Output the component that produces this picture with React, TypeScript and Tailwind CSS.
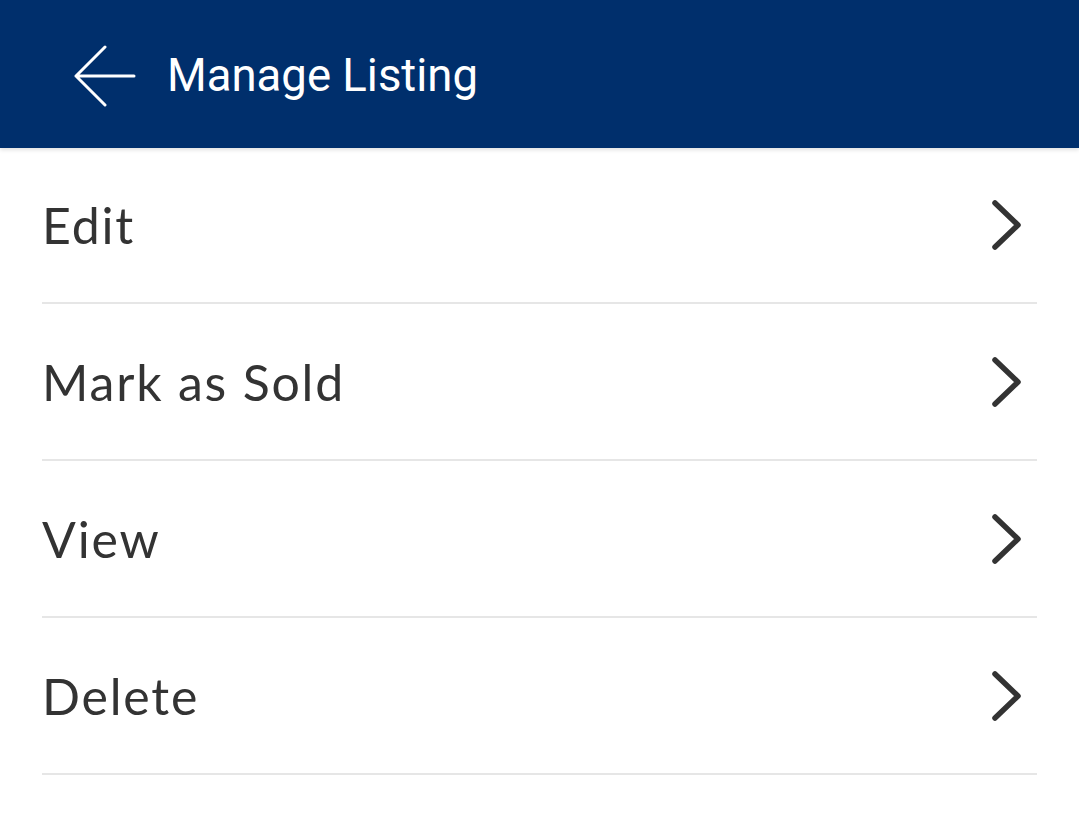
export default function App() {
  const items = ["Edit", "Mark as Sold", "View", "Delete"];

  return (
    <div className="w-[1079px] h-[831px] bg-white overflow-hidden">
      <header className="h-[148px] bg-[#002f6c] flex items-center pl-[74px] pt-[3px] shadow-[0_2px_4px_rgba(0,0,0,0.12)] relative z-10">
        <svg width="62" height="62" viewBox="0 0 62 62" fill="none" stroke="white" strokeWidth="3" strokeLinecap="round" strokeLinejoin="round">
          <path d="M60 31H2M31 2L2 31l29 29" />
        </svg>
        <h1 className="ml-[31px] text-white text-[45.5px] font-['Roboto',sans-serif] leading-none">Manage Listing</h1>
      </header>

      <ul className="px-[42px] w-[1079px] box-border">
        {items.map((label) => (
          <li key={label} className="h-[157px] first:h-[156px] flex items-center justify-between border-b-2 border-[#e6e6e6]">
            <span className="text-[50px] tracking-[1.8px] text-[#333333] font-['Lato',sans-serif] leading-none">{label}</span>
            <svg className="mr-[14px]" width="32" height="50" viewBox="0 0 32 50" fill="none" stroke="#333333" strokeWidth="5.5" strokeLinecap="round" strokeLinejoin="round">
              <path d="M4 3l23 22L4 47" />
            </svg>
          </li>
        ))}
      </ul>
    </div>
  );
}
